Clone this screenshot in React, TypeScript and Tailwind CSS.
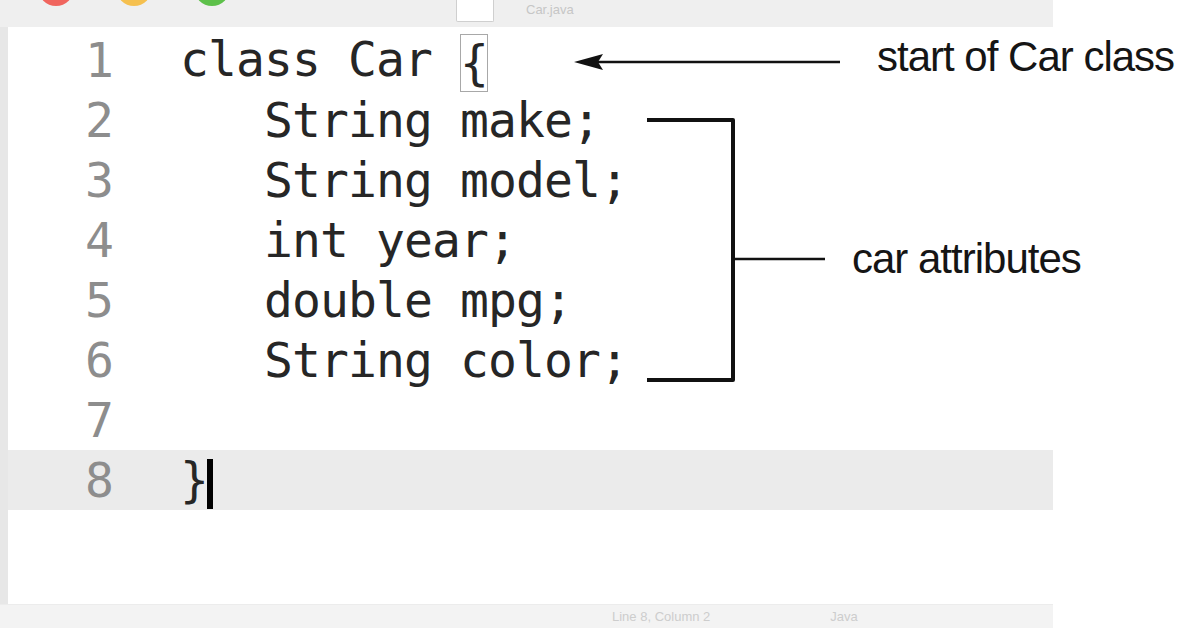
import React from 'react'

const mono = { fontFamily: '"DejaVu Sans Mono", "Liberation Mono", monospace' }
const sans = { fontFamily: '"Liberation Sans", Arial, sans-serif' }

const lines: React.ReactNode[] = [
  <>
    class Car{' '}
    <span className="inline-block align-middle h-[58px] leading-[58px] outline outline-[1.5px] outline-[#a8a8a8] -outline-offset-1">{'{'}</span>
  </>,
  <>{'   '}String make;</>,
  <>{'   '}String model;</>,
  <>{'   '}int year;</>,
  <>{'   '}double mpg;</>,
  <>{'   '}String color;</>,
  <></>,
  <>
    {'}'}
    <span className="inline-block w-[6px] h-[50px] bg-black align-middle -ml-px" />
  </>,
]

function TitleBar() {
  return (
    <div className="h-[27px] bg-[#efefef] flex items-start overflow-hidden">
      <div className="flex gap-[42px] pl-[38px]">
        <span className="w-9 h-9 -mt-[30px] rounded-full bg-[#f0655e]" />
        <span className="w-9 h-9 -mt-[30px] rounded-full bg-[#f5c04f]" />
        <span className="w-9 h-9 -mt-[30px] rounded-full bg-[#5dc04a]" />
      </div>
      <div className="ml-[226px] flex items-start gap-8 h-full">
        <span className="w-[38px] h-[22px] bg-white border border-[#cfcfcf] border-t-0 rounded-b-[2px]" />
        <span className="text-[13px] leading-none text-[#c6c6c6] mt-[3px]" style={sans}>
          Car.java
        </span>
      </div>
    </div>
  )
}

function Editor() {
  return (
    <div className="flex-1 flex">
      <div className="w-2 bg-[#e7e7e7]" />
      <div className="flex-1 bg-white pt-[3px] flex flex-col">
        {lines.map((code, i) => (
          <div key={i} className={`h-[60px] flex items-center ${i === 7 ? 'bg-[#ebebeb]' : ''}`}>
            <div className="w-[105px] text-right text-[48px] leading-none text-[#8d8d8d] tracking-[-0.9px]" style={mono}>
              {i + 1}
            </div>
            <div className="pl-[67px] text-[48px] leading-[60px] text-[#262626] whitespace-pre tracking-[-0.9px]" style={mono}>
              {code}
            </div>
          </div>
        ))}
        <div className="flex-1" />
      </div>
    </div>
  )
}

function StatusBar() {
  return (
    <div className="h-[24px] bg-[#f3f3f3] border-t border-[#ececec] flex items-center pl-[612px] gap-[120px]">
      <span className="text-[13px] leading-none text-[#cdcdcd]" style={sans}>
        Line 8, Column 2
      </span>
      <span className="text-[13px] leading-none text-[#cdcdcd]" style={sans}>
        Java
      </span>
    </div>
  )
}

export default function App() {
  return (
    <div className="relative w-[1199px] h-[628px] bg-white overflow-hidden flex">
      <div className="w-[1053px] flex flex-col">
        <TitleBar />
        <Editor />
        <StatusBar />
      </div>
      <div className="flex-1 bg-white" />

      {/* callouts */}
      <svg className="absolute inset-0 pointer-events-none" width="1199" height="628">
        <line x1="598" y1="62" x2="840" y2="62" stroke="#111" strokeWidth="2.5" />
        <polygon points="574,62 603,54 598,62 603,70" fill="#111" />
        <path d="M647 120 H733 V380 H647" fill="none" stroke="#111" strokeWidth="4" strokeLinejoin="round" />
        <line x1="733" y1="259" x2="825" y2="259" stroke="#111" strokeWidth="2.5" />
      </svg>
      <div className="absolute left-[877px] top-[36px] text-[42px] leading-none tracking-[-1px] text-[#151515]" style={sans}>
        start of Car class
      </div>
      <div className="absolute left-[852px] top-[238px] text-[42px] leading-none tracking-[-1px] text-[#151515]" style={sans}>
        car attributes
      </div>
    </div>
  )
}
